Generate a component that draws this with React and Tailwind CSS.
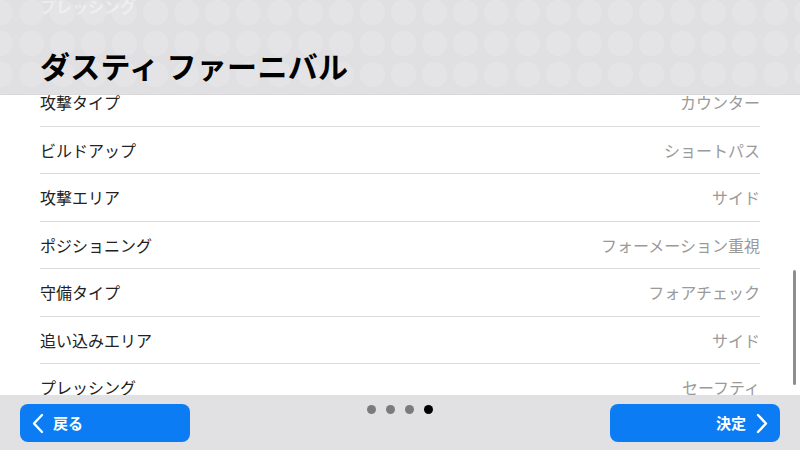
const rows = [
    ['攻撃タイプ', 'カウンター'],
    ['ビルドアップ', 'ショートパス'],
    ['攻撃エリア', 'サイド'],
    ['ポジショニング', 'フォーメーション重視'],
    ['守備タイプ', 'フォアチェック'],
    ['追い込みエリア', 'サイド'],
    ['プレッシング', 'セーフティ'],
];

// 細めの山形矢印
function Chevron({ dir }) {
    const points = dir === 'left' ? '10,2 2,10.5 10,19' : '2,2 10,10.5 2,19';
    return (
        <svg width="12" height="21" viewBox="0 0 12 21" fill="none">
            <polyline points={points} stroke="white" strokeWidth="2.4" strokeLinecap="round" strokeLinejoin="round" />
        </svg>
    );
}

export default function App() {
    return (
        <div
            className="flex h-[450px] w-[800px] flex-col overflow-hidden bg-white"
            style={{ fontFamily: '"Noto Sans CJK JP", "Noto Sans", sans-serif' }}
        >
            {/* ヘッダー */}
            <div className="relative h-[95px] shrink-0 border-b border-[#d8d8da] bg-[#e0e0e2] bg-[radial-gradient(circle,#e4e4e6_12px,transparent_13px)] bg-[size:31px_31px] bg-[position:-15px_-3px] px-10">
                <div className="absolute left-10 top-[-4px] text-[16px] font-bold leading-[20px] text-white/40">
                    プレッシング
                </div>
                <h1 className="pt-[43px] text-[30px] font-bold leading-[44px] tracking-[0.3px] text-black">
                    ダスティ ファーニバル
                </h1>
            </div>

            {/* リスト */}
            <div className="relative min-h-0 flex-1 overflow-hidden">
                <div className="-mt-[16px] px-10">
                    {rows.map(([label, value]) => (
                        <div
                            key={label}
                            className="flex h-[47.5px] items-center justify-between border-b border-[#dcdcdc] text-[16px]"
                        >
                            <span className="text-[#222]">{label}</span>
                            <span className="text-[#9a9a9a]">{value}</span>
                        </div>
                    ))}
                </div>
                {/* スクロールバー */}
                <div className="absolute right-[4px] top-[175px] h-[115px] w-[3px] rounded-full bg-[#8e8e8e]" />
            </div>

            {/* フッター */}
            <div className="flex h-[55px] shrink-0 items-start justify-between bg-[#e1e1e3] px-5 pt-[9px]">
                <button className="flex h-[38px] w-[170px] items-center gap-[9px] rounded-[8px] bg-[#0b7cf4] pl-[12px] text-[15px] font-bold text-white">
                    <Chevron dir="left" />
                    <span>戻る</span>
                </button>
                <div className="mt-[1px] flex gap-[10px]">
                    <span className="h-[9px] w-[9px] rounded-full bg-[#7b7b7d]" />
                    <span className="h-[9px] w-[9px] rounded-full bg-[#7b7b7d]" />
                    <span className="h-[9px] w-[9px] rounded-full bg-[#7b7b7d]" />
                    <span className="h-[9px] w-[9px] rounded-full bg-black" />
                </div>
                <button className="flex h-[38px] w-[170px] items-center justify-end gap-[10px] rounded-[8px] bg-[#0b7cf4] pr-[12px] text-[15px] font-bold text-white">
                    <span>決定</span>
                    <Chevron dir="right" />
                </button>
            </div>
        </div>
    );
}
